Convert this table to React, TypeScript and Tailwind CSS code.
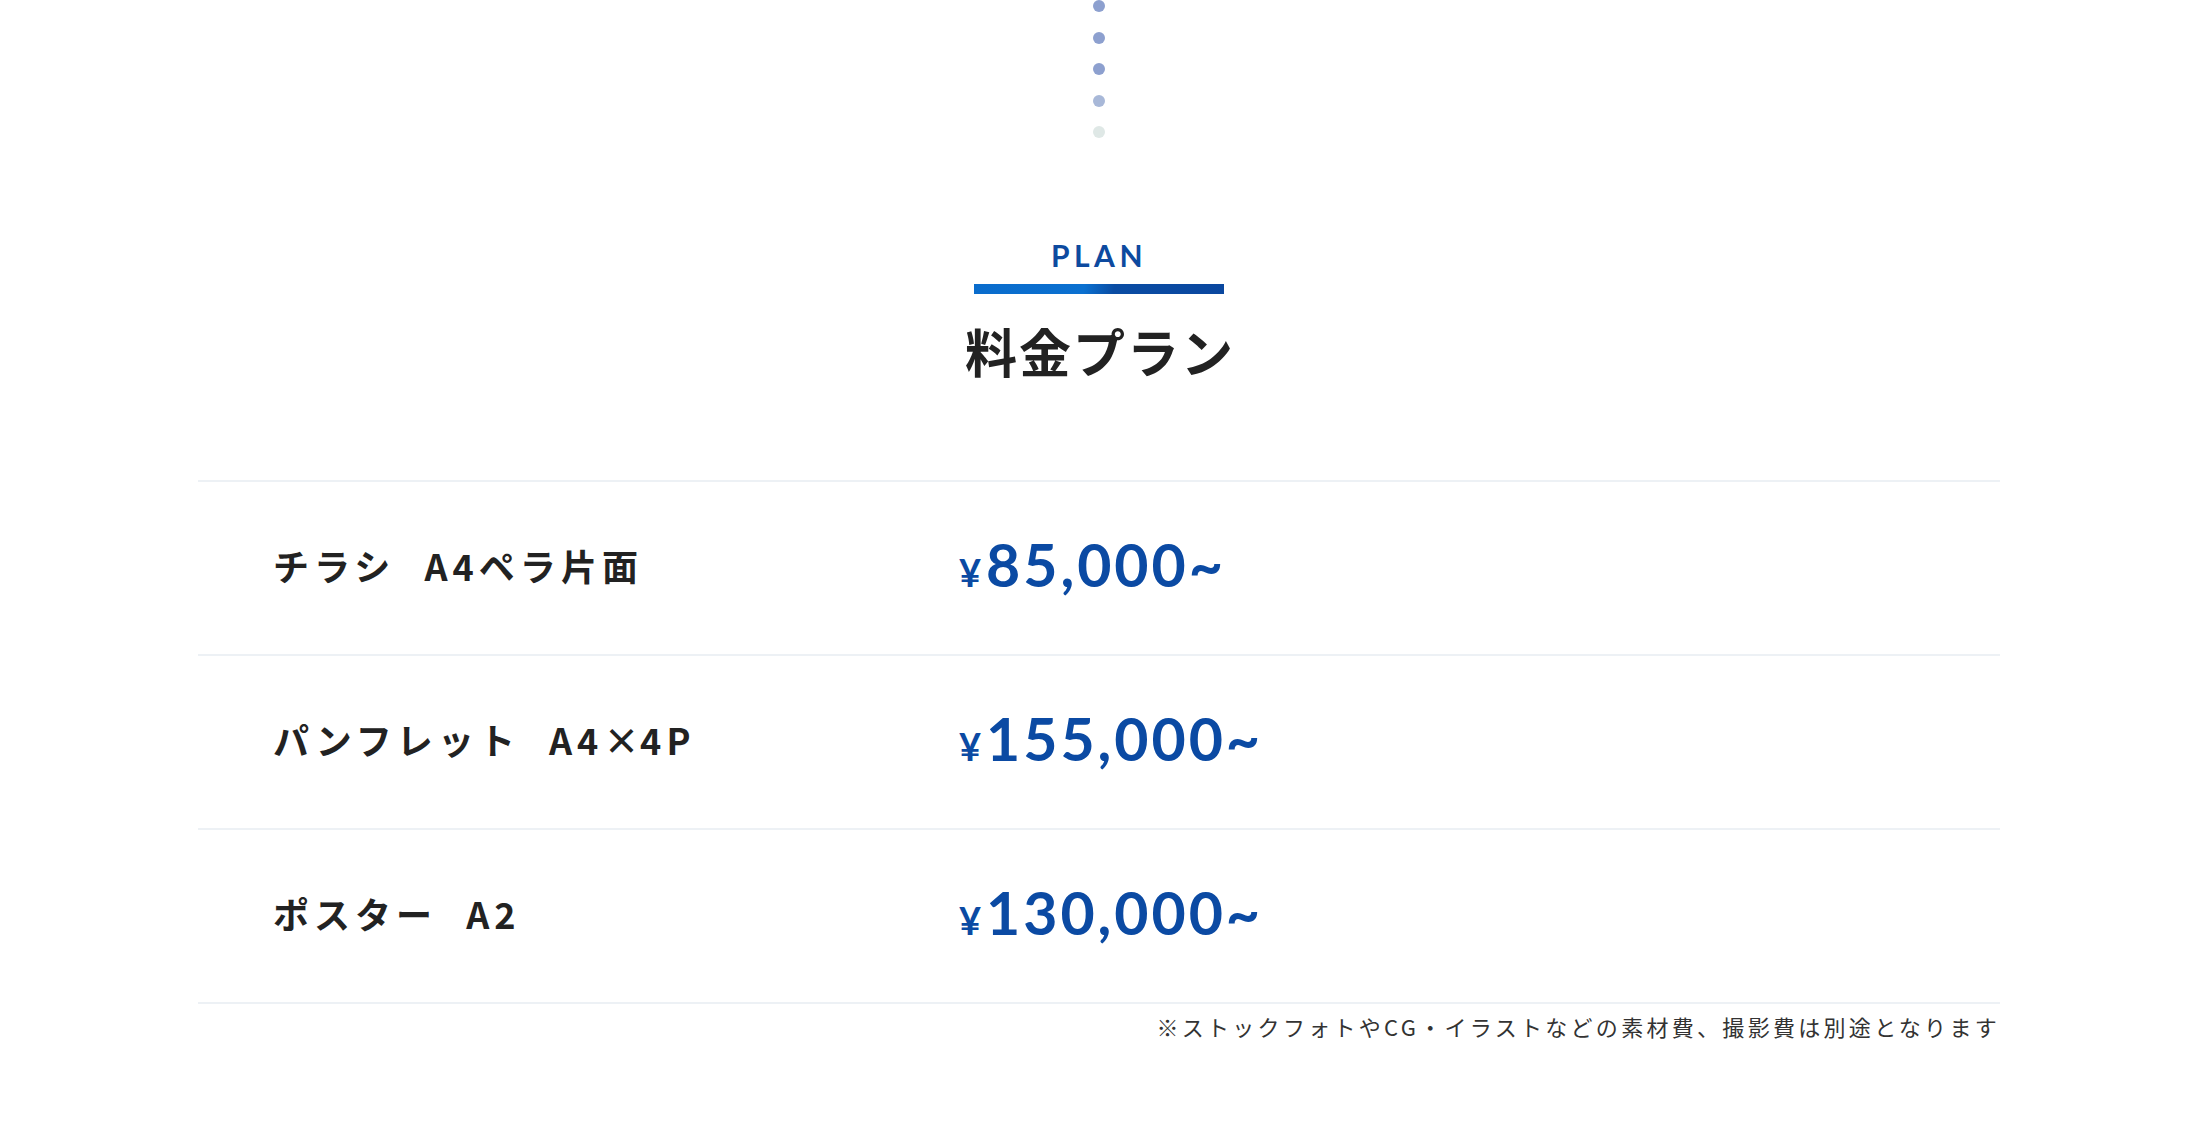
const plans = [
  { name: "チラシ", size: "A4ペラ片面", price: "85,000~" },
  { name: "パンフレット", size: "A4×4P", price: "155,000~" },
  { name: "ポスター", size: "A2", price: "130,000~" },
];

const dots = ["bg-[#8da0cf]", "bg-[#8da0cf]", "bg-[#8da0cf]", "bg-[#a8b8d8]", "bg-[#dfe8e6]"];

export default function App() {
  return (
    <div className="min-h-screen w-full bg-white font-['Noto_Sans_CJK_JP',sans-serif] text-[#222]">
      {/* dotted connector */}
      <div className="flex h-[138px] flex-col items-center gap-[19.5px]">
        {dots.map((c, i) => (
          <span key={i} className={`block h-[12px] w-[12px] shrink-0 rounded-full ${c}`} />
        ))}
      </div>

      {/* heading */}
      <div className="flex flex-col items-center">
        <p className="mt-[102px] font-['Lato',sans-serif] text-[30px] leading-[30px] font-bold tracking-[0.15em] text-[#0d4a9f]">
          PLAN
        </p>
        <span className="mt-[14px] block h-[10px] w-[250px] bg-[linear-gradient(100deg,#0a6ccc_0%,#0b70d0_44%,#0a4ca3_56%,#0a479f_100%)]" />
        <h2 className="mt-[31px] pl-[2px] text-[52px] leading-[52px] font-bold tracking-[2px] text-[#222]">
          料金プラン
        </h2>
      </div>

      {/* price table */}
      <div className="mx-auto mt-[103px] w-[1802px]">
        <div className="border-b-2 border-[#edf1f5]">
          {plans.map((p) => (
            <div key={p.name} className="flex h-[174px] items-center border-t-2 border-[#edf1f5] pl-[75px]">
              <div className="-mt-[7px] w-[686px] shrink-0 text-[36px] font-bold tracking-[0.14em] text-[#222]">
                {p.name}
                <span className="ml-[29px]">
                  {p.size.split("×").map((part, i) => (
                    <span key={i}>
                      {i > 0 && <span className="tracking-[0.02em]">×</span>}
                      {part}
                    </span>
                  ))}
                </span>
              </div>
              <div className="mt-[9px] font-['Lato',sans-serif] font-bold leading-[70px] text-[#0b4aa3]">
                <span className="text-[38px]">¥</span>
                <span className="ml-[5px] text-[59px] tracking-[0.05em]">{p.price}</span>
              </div>
            </div>
          ))}
        </div>
        <p className="mt-[6px] text-right text-[22px] leading-[32px] tracking-[3.3px] text-[#333]">
          ※ストックフォトやCG・イラストなどの素材費、撮影費は別途となります
        </p>
      </div>
    </div>
  );
}
